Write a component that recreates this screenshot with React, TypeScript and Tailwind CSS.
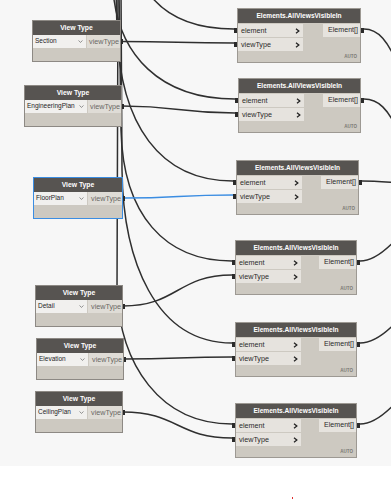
import React from "react";

const FONT = "font-['Liberation_Sans',Arial,sans-serif]";

function Chevron() {
  return (
    <svg width="5" height="6" viewBox="0 0 5 6" className="shrink-0">
      <path d="M1 0.8 L3.8 3 L1 5.2" fill="none" stroke="#222" strokeWidth="1.3" />
    </svg>
  );
}

function DropArrow() {
  return (
    <svg width="5" height="3" viewBox="0 0 5 3" className="shrink-0">
      <path d="M0.5 0.5 L2.5 2.4 L4.5 0.5" fill="none" stroke="#777" strokeWidth="0.8" />
    </svg>
  );
}

function ViewTypeNode({
  pos,
  dd,
  value,
  selected,
}: {
  pos: string;
  dd: string;
  value: string;
  selected?: boolean;
}) {
  return (
    <div
      className={`absolute flex flex-col ${pos} ${
        selected ? "border-[1.5px] border-[#3b8de2]" : "border border-[#8d8984]"
      }`}
    >
      <div className="h-[14px] bg-[#575451] text-white font-bold text-[6.8px] leading-none flex items-center justify-center">
        View Type
      </div>
      <div className="h-[13px] flex bg-[#cdc9c1] gap-[1px]">
        <div
          className={`${dd} bg-[#f1f0ee] flex items-center justify-between pl-[2px] pr-[3px] text-[6.5px] leading-none text-[#1e1e1e]`}
        >
          <span>{value}</span>
          <DropArrow />
        </div>
        <div className="flex-1 bg-[#dfdcd6] flex items-center justify-end pr-[1px] text-[7.2px] leading-none text-[#6a6865]">
          viewType
        </div>
      </div>
      <div className="h-[13px] bg-[#cdc9c1]" />
      <div className="absolute right-[-3px] top-[18px] w-[2px] h-[5px] bg-[#2a2a2a]" />
    </div>
  );
}

function ViewsNode({ pos }: { pos: string }) {
  return (
    <div className={`absolute flex flex-col h-[55px] border border-[#9d9993] bg-[#cdc9c1] ${pos}`}>
      <div className="h-[14px] bg-[#575451] text-white font-bold text-[6.6px] leading-none flex items-center justify-center">
        Elements.AllViewsVisibleIn
      </div>
      <div className="flex flex-1 justify-between pt-[1px]">
        <div className="flex flex-col gap-[1px] w-[65px]">
          <div className="h-[13px] bg-[#e6e3de] flex items-center justify-between pl-[3px] pr-[3px] text-[7.2px] leading-none text-[#2a2a2a]">
            <span>element</span>
            <Chevron />
          </div>
          <div className="h-[13px] bg-[#e6e3de] flex items-center justify-between pl-[3px] pr-[3px] text-[7.2px] leading-none text-[#2a2a2a]">
            <span>viewType</span>
            <Chevron />
          </div>
        </div>
        <div className="flex flex-col justify-between items-end">
          <div className="h-[13px] w-[37px] bg-[#e6e3de] flex items-center justify-end pr-[2px] text-[7.1px] leading-none text-[#2a2a2a]">
            Element[]
          </div>
          <div className="text-[4.5px] leading-none font-bold text-[#7a7773] pr-[3px] pb-[3px]">AUTO</div>
        </div>
      </div>
      <div className="absolute left-[-4px] top-[19px] w-[3px] h-[5px] bg-[#2a2a2a]" />
      <div className="absolute left-[-4px] top-[33px] w-[3px] h-[5px] bg-[#2a2a2a]" />
      <div className="absolute right-[-4px] top-[19px] w-[3px] h-[5px] bg-[#2a2a2a]" />
    </div>
  );
}

function wire(x1: number, y1: number, x2: number, y2: number) {
  const dx = Math.max(20, (x2 - x1) / 2);
  return `M ${x1} ${y1} C ${x1 + dx} ${y1}, ${x2 - dx} ${y2}, ${x2} ${y2}`;
}

export default function App() {
  const dark = [
    // element inputs (bundle from above)
    "M 150 -5 C 168 18, 195 29, 234 29",
    "M 113 -10 C 118 55, 160 99, 235 99",
    "M 116 -10 L 117 30 C 120 125, 160 181, 233 181",
    "M 119 -10 L 121 130 C 123 215, 165 261, 232 261",
    "M 121 -10 L 122 170 C 123 260, 155 343, 232 343",
    "M 118 -10 L 117 290 C 120 365, 160 424, 232 424",
    // view type outputs
    wire(121, 41.5, 234, 43),
    wire(122, 106, 235, 113),
    wire(123, 306, 232, 275),
    wire(124, 359, 232, 357),
    wire(123, 412, 232, 438),
    // outputs to the right
    "M 364 29 C 378 29, 388 40, 400 70",
    "M 364 99 C 378 99, 388 108, 400 135",
    "M 362 181 C 375 181, 385 182, 400 183",
    "M 360 261 C 372 261, 385 252, 400 235",
    "M 360 343 C 372 343, 385 335, 400 318",
    "M 360 424 C 372 424, 385 415, 400 398",
  ];
  return (
    <div className={`relative w-[391px] h-[500px] bg-white overflow-hidden ${FONT}`}>
      <div className="relative h-[466px] bg-[#f7f7f7] overflow-hidden">
        <svg className="absolute inset-0" width="391" height="466" viewBox="0 0 391 466">
          {dark.map((d, i) => (
            <path key={i} d={d} fill="none" stroke="#2f2f2f" strokeWidth="1.5" />
          ))}
          <path d={wire(124, 198, 233, 195)} fill="none" stroke="#3b8de2" strokeWidth="1.5" />
        </svg>

        <ViewTypeNode pos="left-[32px] top-[20px] w-[89px]" dd="w-[53px]" value="Section" />
        <ViewTypeNode pos="left-[24px] top-[85px] w-[98px]" dd="w-[62px]" value="EngineeringPlan" />
        <ViewTypeNode pos="left-[33px] top-[177px] w-[90px]" dd="w-[53px]" value="FloorPlan" selected />
        <ViewTypeNode pos="left-[35px] top-[285px] w-[88px]" dd="w-[51px]" value="Detail" />
        <ViewTypeNode pos="left-[36px] top-[338px] w-[88px]" dd="w-[51px]" value="Elevation" />
        <ViewTypeNode pos="left-[35px] top-[391px] w-[88px]" dd="w-[51px]" value="CeilingPlan" />

        <ViewsNode pos="left-[237px] top-[8px] w-[124px]" />
        <ViewsNode pos="left-[238px] top-[78px] w-[123px]" />
        <ViewsNode pos="left-[236px] top-[160px] w-[123px]" />
        <ViewsNode pos="left-[235px] top-[240px] w-[122px]" />
        <ViewsNode pos="left-[235px] top-[322px] w-[122px]" />
        <ViewsNode pos="left-[235px] top-[403px] w-[122px]" />
      </div>
      <div className="absolute left-[292px] top-[497px] w-[1px] h-[2px] bg-[#e03030]" />
    </div>
  );
}
